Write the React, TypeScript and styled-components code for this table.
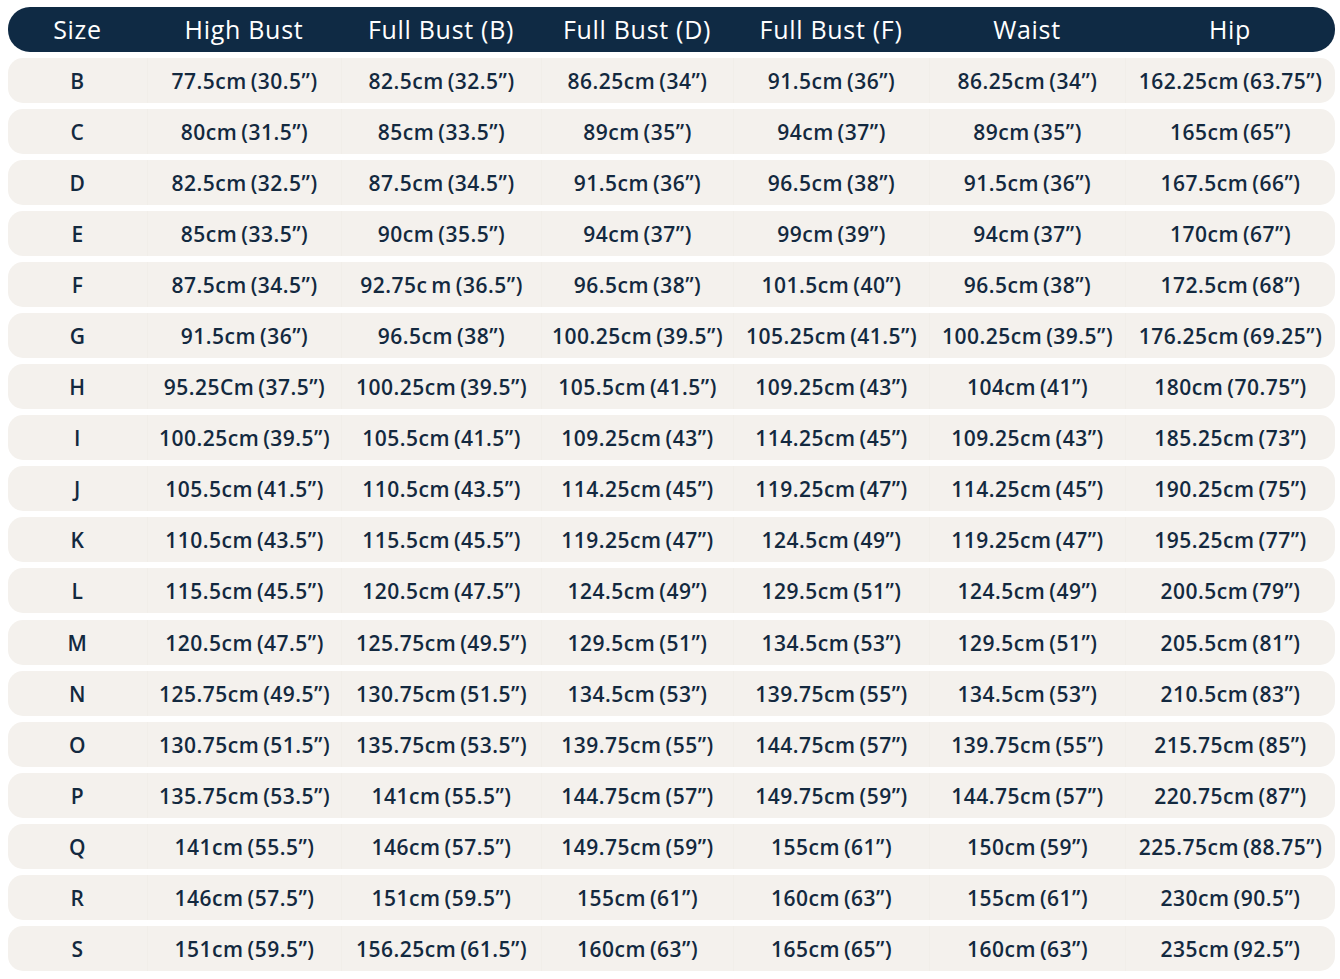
import React from "react";
import styled, { createGlobalStyle } from "styled-components";

const Global = createGlobalStyle`
  html, body { margin: 0; padding: 0; background: #ffffff; }
  body { font-family: "Open Sans", "Noto Sans", sans-serif; }
`;

const COLS = "139px 194px 200px 192px 196px 196px 210px";

const Table = styled.div`
  display: flex;
  flex-direction: column;
  gap: 6.1px;
  width: 1327px;
  padding: 7px 0 0 8px;
`;

const HeaderRow = styled.div`
  display: grid;
  grid-template-columns: ${COLS};
  height: 45px;
  background: #0f2a44;
  border-radius: 22px;
  margin-bottom: -0.6px;
`;

const HeaderCell = styled.div`
  display: flex;
  align-items: center;
  justify-content: center;
  color: #ffffff;
  font-family: "Open Sans", sans-serif;
  font-weight: 400;
  font-size: 25px;
  letter-spacing: 0.7px;
  padding-bottom: 2px;
`;

const Row = styled.div`
  display: grid;
  grid-template-columns: ${COLS};
  height: 45px;
  background: #f4f1ed;
  border-radius: 15px;
  overflow: hidden;
`;

const Cell = styled.div<{ $first?: boolean }>`
  display: flex;
  align-items: center;
  justify-content: center;
  color: #13293f;
  font-family: "Open Sans", sans-serif;
  font-weight: 600;
  font-size: 21px;
  letter-spacing: 0.5px;
  word-spacing: -2px;
  padding-top: 1px;
  border-left: ${(p) => (p.$first ? "none" : "1px solid #f1eee9")};
`;

const headers = ["Size", "High Bust", "Full Bust (B)", "Full Bust (D)", "Full Bust (F)", "Waist", "Hip"];

const rows: string[][] = [
  ["B", "77.5cm (30.5”)", "82.5cm (32.5”)", "86.25cm (34”)", "91.5cm (36”)", "86.25cm (34”)", "162.25cm (63.75”)"],
  ["C", "80cm (31.5”)", "85cm (33.5”)", "89cm (35”)", "94cm (37”)", "89cm (35”)", "165cm (65”)"],
  ["D", "82.5cm (32.5”)", "87.5cm (34.5”)", "91.5cm (36”)", "96.5cm (38”)", "91.5cm (36”)", "167.5cm (66”)"],
  ["E", "85cm (33.5”)", "90cm (35.5”)", "94cm (37”)", "99cm (39”)", "94cm (37”)", "170cm (67”)"],
  ["F", "87.5cm (34.5”)", "92.75c m (36.5”)", "96.5cm (38”)", "101.5cm (40”)", "96.5cm (38”)", "172.5cm (68”)"],
  ["G", "91.5cm (36”)", "96.5cm (38”)", "100.25cm (39.5”)", "105.25cm (41.5”)", "100.25cm (39.5”)", "176.25cm (69.25”)"],
  ["H", "95.25Cm (37.5”)", "100.25cm (39.5”)", "105.5cm (41.5”)", "109.25cm (43”)", "104cm (41”)", "180cm (70.75”)"],
  ["I", "100.25cm (39.5”)", "105.5cm (41.5”)", "109.25cm (43”)", "114.25cm (45”)", "109.25cm (43”)", "185.25cm (73”)"],
  ["J", "105.5cm (41.5”)", "110.5cm (43.5”)", "114.25cm (45”)", "119.25cm (47”)", "114.25cm (45”)", "190.25cm (75”)"],
  ["K", "110.5cm (43.5”)", "115.5cm (45.5”)", "119.25cm (47”)", "124.5cm (49”)", "119.25cm (47”)", "195.25cm (77”)"],
  ["L", "115.5cm (45.5”)", "120.5cm (47.5”)", "124.5cm (49”)", "129.5cm (51”)", "124.5cm (49”)", "200.5cm (79”)"],
  ["M", "120.5cm (47.5”)", "125.75cm (49.5”)", "129.5cm (51”)", "134.5cm (53”)", "129.5cm (51”)", "205.5cm (81”)"],
  ["N", "125.75cm (49.5”)", "130.75cm (51.5”)", "134.5cm (53”)", "139.75cm (55”)", "134.5cm (53”)", "210.5cm (83”)"],
  ["O", "130.75cm (51.5”)", "135.75cm (53.5”)", "139.75cm (55”)", "144.75cm (57”)", "139.75cm (55”)", "215.75cm (85”)"],
  ["P", "135.75cm (53.5”)", "141cm (55.5”)", "144.75cm (57”)", "149.75cm (59”)", "144.75cm (57”)", "220.75cm (87”)"],
  ["Q", "141cm (55.5”)", "146cm (57.5”)", "149.75cm (59”)", "155cm (61”)", "150cm (59”)", "225.75cm (88.75”)"],
  ["R", "146cm (57.5”)", "151cm (59.5”)", "155cm (61”)", "160cm (63”)", "155cm (61”)", "230cm (90.5”)"],
  ["S", "151cm (59.5”)", "156.25cm (61.5”)", "160cm (63”)", "165cm (65”)", "160cm (63”)", "235cm (92.5”)"],
];

export default function App() {
  return (
    <>
      <Global />
      <Table>
        <HeaderRow>
          {headers.map((h) => (
            <HeaderCell key={h}>{h}</HeaderCell>
          ))}
        </HeaderRow>
        {rows.map((r) => (
          <Row key={r[0]}>
            {r.map((c, i) => (
              <Cell key={i} $first={i === 0}>
                {c}
              </Cell>
            ))}
          </Row>
        ))}
      </Table>
    </>
  );
}
